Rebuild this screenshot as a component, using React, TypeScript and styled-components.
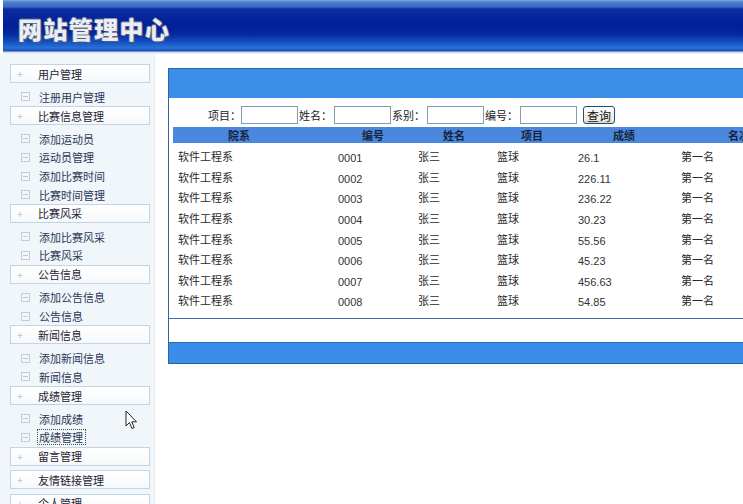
import styled, { createGlobalStyle } from "styled-components";

const GlobalStyle = createGlobalStyle`
  html, body {
    margin: 0;
    padding: 0;
    background: #ffffff;
    overflow: hidden;
  }
  body {
    font-family: "Liberation Sans", "Noto Sans CJK SC", sans-serif;
  }
`;

const Page = styled.div`
  position: relative;
  width: 743px;
  height: 504px;
  overflow: hidden;
  background: #ffffff;
`;

const Banner = styled.div`
  height: 54px;
  margin-left: 3px;
  display: flex;
  align-items: center;
  padding-left: 15px;
  background: linear-gradient(
    to bottom,
    #86a9dc 0px,
    #4d7fcb 2px,
    #3667c2 7px,
    #0b2d9e 9px,
    #001f98 26px,
    #04299f 34px,
    #1550c0 42px,
    #2a72d8 48px,
    #1b4cb0 51px,
    #c9d8ee 52px,
    #f4f8fc 54px
  );
`;

const Title = styled.h1`
  margin: 2px 0 0;
  font-family: "Noto Sans CJK SC", sans-serif;
  font-size: 24px;
  font-weight: 900;
  letter-spacing: 1.4px;
  color: #e9edf5;
  text-shadow: 1px 1px 0 #555c70, -1px 0 0 #6b7488, 0 -1px 0 #8890a4;
`;

const Body = styled.div`
  display: flex;
  height: 450px;
`;

const Sidebar = styled.div`
  width: 155px;
  flex-shrink: 0;
  background: #f1f6fb;
  border-right: 1px solid #e2ebf4;
  padding-top: 10px;
  box-sizing: border-box;
`;

const GroupHead = styled.div`
  margin: 0 0 4.5px 10px;
  width: 140px;
  height: 19px;
  box-sizing: border-box;
  border: 1px solid #c3d4e6;
  background: linear-gradient(to bottom, #ffffff, #f6f9fc);
  display: flex;
  align-items: center;
  font-family: "Noto Sans CJK SC", sans-serif;
  font-size: 11px;
  color: #1f2433;
`;

const Plus = styled.span`
  width: 27px;
  padding-left: 6px;
  box-sizing: border-box;
  color: #b6c4d2;
  font-size: 10px;
`;

const Item = styled.div`
  height: 18.6px;
  display: flex;
  align-items: center;
  padding-left: 21px;
  font-family: "Noto Sans CJK SC", sans-serif;
  font-size: 11px;
  color: #2b3656;
`;

const Minus = styled.span`
  width: 7px;
  height: 7px;
  border: 1px solid #c4ccd6;
  margin-right: 8px;
  position: relative;
  &::after {
    content: "";
    position: absolute;
    left: 1px;
    right: 1px;
    top: 3px;
    height: 1px;
    background: #c4ccd6;
  }
`;

const ItemText = styled.span<{ $focused?: boolean }>`
  padding: 0 2px 0 1px;
  margin-left: -1px;
  border: 1px dotted ${({ $focused }) => ($focused ? "#4a4a4a" : "transparent")};
  line-height: 14px;
`;

const Content = styled.div`
  flex: 1;
  padding: 14px 0 0 13px;
  min-width: 0;
`;

const Panel = styled.div`
  width: 640px;
  border-left: 1px solid #3365a3;
  box-sizing: border-box;
`;

const TopBar = styled.div`
  height: 30px;
  box-sizing: border-box;
  background: #3c8ee8;
  border-top: 1px solid #2f66ad;
`;

const PanelMain = styled.div`
  background: #ffffff;
  border-bottom: 1px solid #3a6fa8;
  padding: 8px 0 6px 4px;
`;

const SearchRow = styled.div`
  display: flex;
  align-items: center;
  height: 18px;
  padding-left: 35px;
  margin-bottom: 3px;
`;

const Label = styled.span<{ $first?: boolean }>`
  font-family: "Noto Sans CJK SC", sans-serif;
  font-size: 11px;
  color: #1c1c1c;
  width: ${({ $first }) => ($first ? "auto" : "36px")};
  padding-left: ${({ $first }) => ($first ? "0" : "1px")};
  box-sizing: border-box;
  white-space: nowrap;
`;

const Input = styled.input`
  width: 57px;
  height: 18px;
  box-sizing: border-box;
  border: 1px solid #7f9db9;
  background: #ffffff;
  padding: 0;
  margin: 0;
`;

const Button = styled.button`
  margin-left: 6px;
  height: 18px;
  width: 32px;
  padding: 0;
  box-sizing: border-box;
  border: 1px solid #1c4e86;
  border-radius: 3px;
  background: linear-gradient(to bottom, #ffffff, #eeece2 80%, #d8d4c4);
  font-family: "Noto Sans CJK SC", sans-serif;
  font-size: 12px;
  line-height: 15px;
  color: #111;
`;

const HeadRow = styled.div`
  height: 16px;
  background: #4b87dc;
  display: grid;
  grid-template-columns: 134px 81px 78px 92px 115px 1fr;
  padding-left: 55px;
  align-items: center;
  font-family: "Noto Sans CJK SC", sans-serif;
  font-size: 11px;
  font-weight: 700;
  color: #16243e;
  margin-bottom: 4px;
`;

const Row = styled.div`
  height: 20.6px;
  display: grid;
  grid-template-columns: 160px 80px 79px 81px 103px 1fr;
  padding-left: 5px;
  align-items: center;
  font-size: 11px;
  color: #2a2a2a;
`;

const Cjk = styled.span`
  font-family: "Noto Sans CJK SC", sans-serif;
  margin-top: -2px;
`;

const Num = styled.span`
  font-family: "Liberation Sans", sans-serif;
  margin-top: 2px;
  color: #333;
`;

const Spacer = styled.div`
  height: 23px;
  background: #ffffff;
`;

const BottomBar = styled.div`
  height: 22px;
  box-sizing: border-box;
  background: #3a8de8;
  border-top: 1px solid #2d68b0;
  border-bottom: 1px solid #2a5d9c;
`;

const Cursor = styled.svg`
  position: absolute;
  left: 125px;
  top: 410px;
`;

type MenuGroup = { title: string; items: string[] };

const menu: MenuGroup[] = [
  { title: "用户管理", items: ["注册用户管理"] },
  {
    title: "比赛信息管理",
    items: ["添加运动员", "运动员管理", "添加比赛时间", "比赛时间管理"],
  },
  { title: "比赛风采", items: ["添加比赛风采", "比赛风采"] },
  { title: "公告信息", items: ["添加公告信息", "公告信息"] },
  { title: "新闻信息", items: ["添加新闻信息", "新闻信息"] },
  { title: "成绩管理", items: ["添加成绩", "成绩管理"] },
  { title: "留言管理", items: [] },
  { title: "友情链接管理", items: [] },
  { title: "个人管理", items: [] },
];

const scores = ["26.1", "226.11", "236.22", "30.23", "55.56", "45.23", "456.63", "54.85"];

export default function App() {
  return (
    <Page>
      <GlobalStyle />
      <Banner>
        <Title>网站管理中心</Title>
      </Banner>
      <Body>
        <Sidebar>
          {menu.map((g) => (
            <div key={g.title}>
              <GroupHead>
                <Plus>+</Plus>
                {g.title}
              </GroupHead>
              {g.items.map((it) => (
                <Item key={it}>
                  <Minus />
                  <ItemText $focused={g.title === "成绩管理" && it === "成绩管理"}>
                    {it}
                  </ItemText>
                </Item>
              ))}
            </div>
          ))}
        </Sidebar>
        <Content>
          <Panel>
            <TopBar />
            <PanelMain>
              <SearchRow>
                <Label $first>项目：</Label>
                <Input />
                <Label>姓名：</Label>
                <Input />
                <Label>系别：</Label>
                <Input />
                <Label>编号：</Label>
                <Input />
                <Button>查询</Button>
              </SearchRow>
              <HeadRow>
                <span>院系</span>
                <span>编号</span>
                <span>姓名</span>
                <span>项目</span>
                <span>成绩</span>
                <span>名次</span>
              </HeadRow>
              {scores.map((s, i) => (
                <Row key={i}>
                  <Cjk>软件工程系</Cjk>
                  <Num>{`000${i + 1}`}</Num>
                  <Cjk>张三</Cjk>
                  <Cjk>篮球</Cjk>
                  <Num>{s}</Num>
                  <Cjk>第一名</Cjk>
                </Row>
              ))}
            </PanelMain>
            <Spacer />
            <BottomBar />
          </Panel>
        </Content>
      </Body>
      <Cursor width="13" height="20" viewBox="0 0 13 20">
        <path
          d="M1 1 L1 16 L4.5 12.5 L7 18.5 L9.2 17.6 L6.8 11.8 L11.5 11.8 Z"
          fill="#ffffff"
          stroke="#222"
          strokeWidth="1"
          strokeLinejoin="round"
        />
      </Cursor>
    </Page>
  );
}
